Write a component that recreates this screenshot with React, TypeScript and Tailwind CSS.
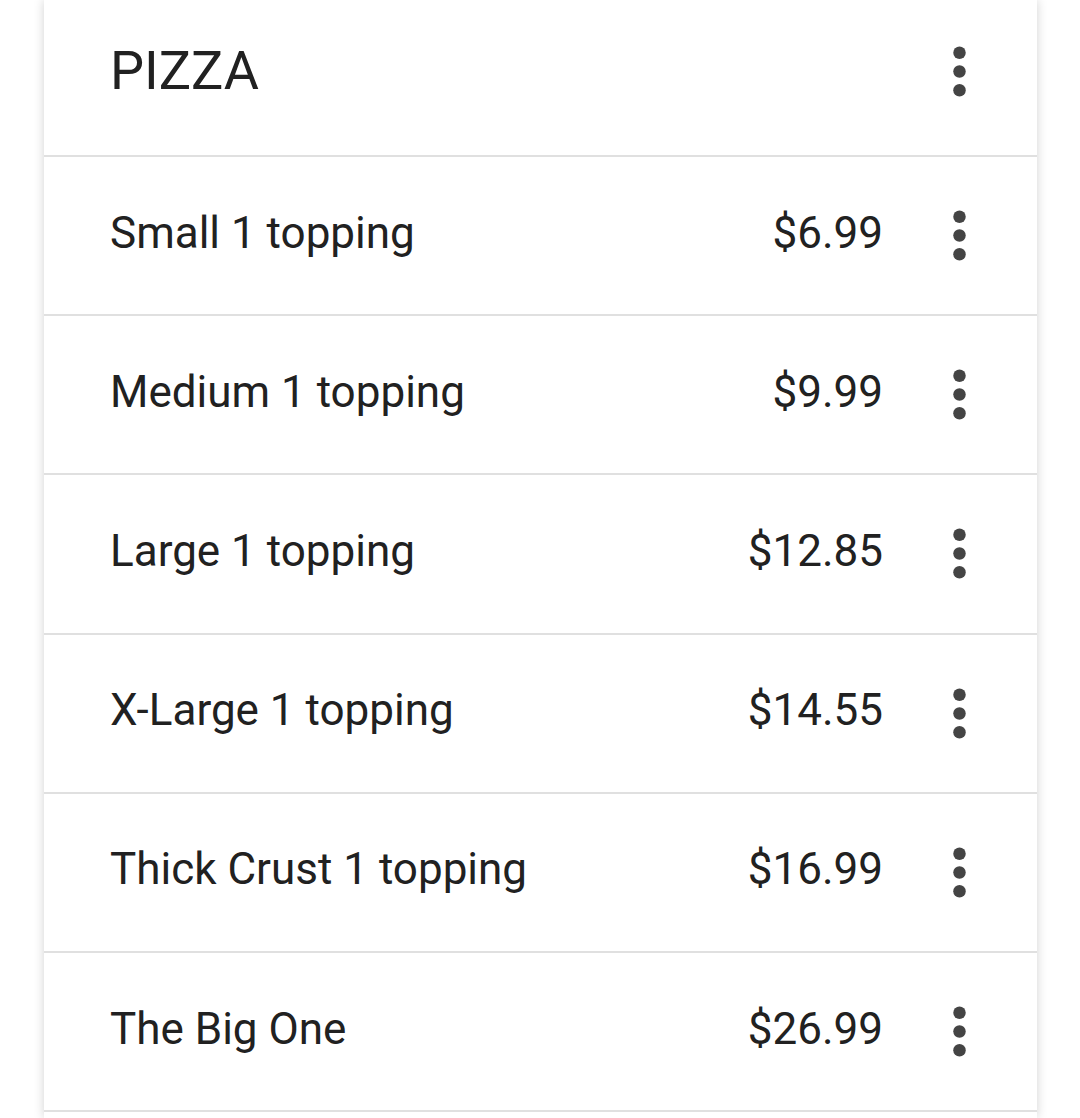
const items = [
  { name: "Small 1 topping", price: "$6.99" },
  { name: "Medium 1 topping", price: "$9.99" },
  { name: "Large 1 topping", price: "$12.85" },
  { name: "X-Large 1 topping", price: "$14.55" },
  { name: "Thick Crust 1 topping", price: "$16.99" },
  { name: "The Big One", price: "$26.99" },
];

const MoreIcon = () => (
  <svg viewBox="0 0 24 24" className="h-[75px] w-[75px] shrink-0" fill="#444444">
    <circle cx="12" cy="6" r="2" />
    <circle cx="12" cy="12" r="2" />
    <circle cx="12" cy="18" r="2" />
  </svg>
);

const App = () => {
  return (
    <div className="h-[1118px] overflow-hidden bg-white font-['Roboto',sans-serif] text-[#212121]">
      <div className="ml-[44px] h-full w-[993px] bg-white shadow-[0_0_10px_rgba(0,0,0,0.18)]">
        {/* Header */}
        <div className="box-border flex h-[157px] items-center border-b-2 border-[#e0e0e0] pb-[13px] pl-[66px] pr-[40px]">
          <h1 className="flex-1 text-[54px] leading-none">PIZZA</h1>
          <MoreIcon />
        </div>

        {/* Rows */}
        {items.map((item) => (
          <div
            key={item.name}
            className="box-border flex h-[159.2px] items-center border-b-2 border-[#e0e0e0] pl-[66px] pr-[40px]"
          >
            <span className="mb-[6px] flex-1 text-[44px] leading-none">{item.name}</span>
            <span className="mb-[6px] text-[44px] leading-none">{item.price}</span>
            <div className="ml-[39px]">
              <MoreIcon />
            </div>
          </div>
        ))}
      </div>
    </div>
  );
};

export default App;
